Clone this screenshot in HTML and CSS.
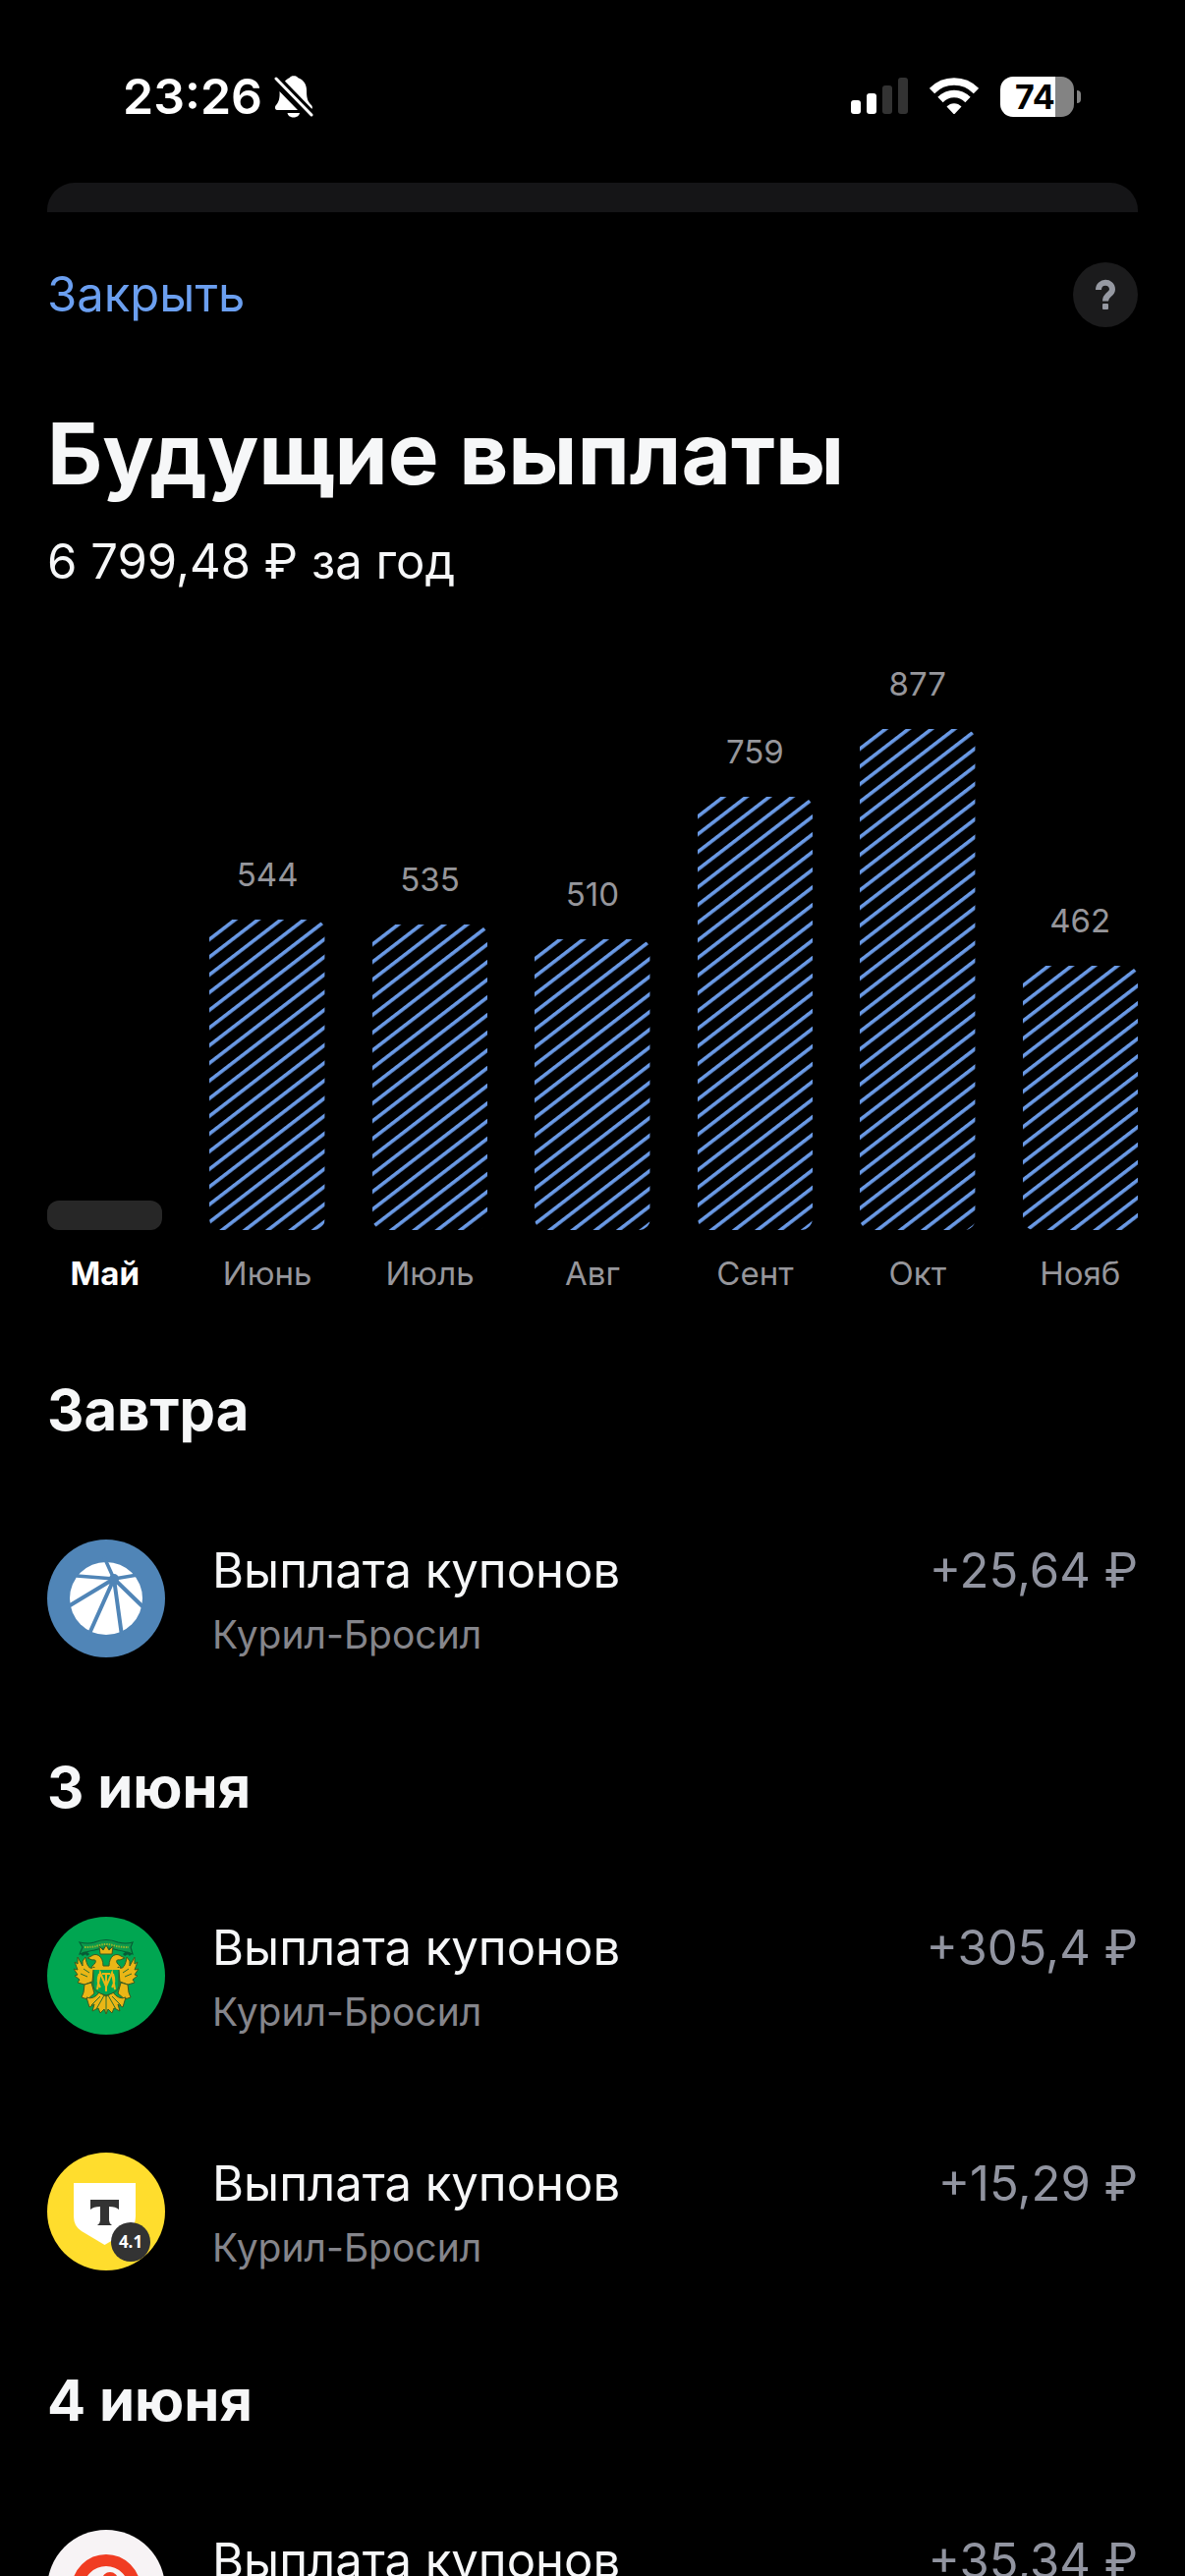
FILE: index.html
```html
<!DOCTYPE html>
<html lang="ru">
<head>
<meta charset="utf-8">
<meta name="viewport" content="width=device-width, initial-scale=1">
<title>Будущие выплаты</title>
<link rel="stylesheet" href="styles.css">
</head>
<body>
<div class="screen">
  <header class="status">
    <div class="status-group">
      <time class="clock">23:26</time>
      <svg class="bell" viewBox="0 0 40 44" width="40" height="44" aria-hidden="true">
        <path fill="#fff" d="M10 8 C12 5 14 4 16 3 C16.500 .5 23.500 .5 24 3 C30 5 33 10 33 16 C33 26 35 28 38 31 C39.500 33 39 35 37 36 Z M5.500 17 L24 36 H3 C.5 36 .5 32 2 31 C4.500 28 6 25 5.500 17 Z M13.500 39 H26 C25 45 14.500 45 13.500 39 Z"/>
        <path stroke="#000" stroke-width="9" d="M2 4 L38 41"/>
        <path stroke="#fff" stroke-width="3" stroke-linecap="round" d="M2 4 L38 41"/>
      </svg>
    </div>
    <div class="status-group status-right">
      <svg viewBox="0 0 58 38" width="58" height="38" aria-hidden="true">
        <rect x="0" y="23" width="10" height="14" rx="3" fill="#fff"/>
        <rect x="16" y="16" width="10" height="21" rx="3" fill="#fff"/>
        <rect x="32" y="8" width="10" height="29" rx="3" fill="#333"/>
        <rect x="48" y="0" width="10" height="37" rx="3" fill="#333"/>
      </svg>
      <svg viewBox="0 0 50 38" width="50" height="38" aria-hidden="true">
        <g fill="none" stroke="#fff" stroke-width="7.500">
          <path d="M2.500 13.500 C15 .8 35 .8 47.500 13.500"/>
          <path d="M11 22.500 C19 14.500 31 14.500 39 22.500"/>
        </g>
        <path fill="#fff" d="M17.500 29.500 C21.500 25 28.500 25 32.500 29.500 L26 36.500 Q25 37.500 24 36.500 Z"/>
      </svg>
      <div class="battery"><span class="battery-body">74</span><span class="battery-tip"></span></div>
    </div>
  </header>
  <div class="sheet-behind"></div>

  <main class="sheet">
    <nav class="toolbar">
      <button class="close" type="button">Закрыть</button>
      <button class="help" type="button" aria-label="Справка">
        <svg viewBox="0 0 24 32" width="24" height="32" aria-hidden="true">
          <path fill="none" stroke="#9699a2" stroke-width="6" d="M5 11 C5 1.500 19 1.500 19 10.500 C19 16 12 15.500 12 22.500"/>
          <rect x="9" y="25" width="6" height="6" rx="1" fill="#9699a2"/>
        </svg>
      </button>
    </nav>
    <h1 class="title">Будущие выплаты</h1>
    <p class="total">6 799,48 ₽ за год</p>

    <svg class="defs" width="0" height="0" aria-hidden="true">
      <defs>
        <pattern id="hatch" width="20" height="14.250" patternUnits="userSpaceOnUse" patternTransform="rotate(-37.600)">
          <rect width="20" height="3.600" fill="#6a9ae6"/>
        </pattern>
      </defs>
    </svg>
    <section class="chart" aria-label="Выплаты по месяцам">
      <div class="month current"><div class="bar empty"></div><span class="name">Май</span></div>
      <div class="month"><span class="value">544</span><svg class="bar" style="height:316px"><rect width="100%" height="100%" fill="url(#hatch)"/></svg><span class="name">Июнь</span></div>
      <div class="month"><span class="value">535</span><svg class="bar" style="height:311px"><rect width="100%" height="100%" fill="url(#hatch)"/></svg><span class="name">Июль</span></div>
      <div class="month"><span class="value">510</span><svg class="bar" style="height:296px"><rect width="100%" height="100%" fill="url(#hatch)"/></svg><span class="name">Авг</span></div>
      <div class="month"><span class="value">759</span><svg class="bar" style="height:441px"><rect width="100%" height="100%" fill="url(#hatch)"/></svg><span class="name">Сент</span></div>
      <div class="month"><span class="value">877</span><svg class="bar" style="height:510px"><rect width="100%" height="100%" fill="url(#hatch)"/></svg><span class="name">Окт</span></div>
      <div class="month"><span class="value">462</span><svg class="bar" style="height:269px"><rect width="100%" height="100%" fill="url(#hatch)"/></svg><span class="name">Нояб</span></div>
    </section>

    <div class="days">
    <section class="day">
      <h2 class="date">Завтра</h2>
      <div class="payments">
        <article class="payment">
          <svg class="logo" viewBox="0 0 120 120" aria-hidden="true">
            <circle cx="60" cy="60" r="60" fill="#5085b7"/>
            <circle cx="60" cy="60" r="37" fill="#fff"/>
            <g stroke="#5085b7" fill="none">
              <path stroke-width="3.500" d="M68 40 L58 18 M68 40 L30 37 M68 40 L92 36"/>
              <path stroke-width="4" d="M68 40 L20 69 M68 40 L42 98 M68 40 L76 98 M68 40 L99 70"/>
            </g>
            <circle cx="68" cy="40" r="5" fill="#5085b7"/>
          </svg>
          <div class="info"><h3 class="kind">Выплата купонов</h3><p class="account">Курил-Бросил</p></div>
          <span class="amount">+25,64 ₽</span>
        </article>
      </div>
    </section>

    <section class="day">
      <h2 class="date">3 июня</h2>
      <div class="payments">
        <article class="payment">
          <svg class="logo" viewBox="0 0 120 120" aria-hidden="true">
            <circle cx="60" cy="60" r="60" fill="#00a651"/>
            <path d="M33 26 Q42 28 48 26 Q60 21 72 26 Q80 28 87 26 L85 31 L87 38 Q78 35 72 34 Q60 30 48 34 Q42 35 33 38 L36 31 Z" fill="#0c9a4b" stroke="#075c35" stroke-width="1.200"/>
            <path d="M38 31 Q46 31 50 30 Q60 26 70 30 Q76 31 83 31" fill="none" stroke="#9bb52c" stroke-width="2" stroke-dasharray="1.500 1"/>
            <path d="M35 39 q4 -4 7 0 M78 39 q4 -4 7 0" fill="none" stroke="#075c35" stroke-width="3"/>
            <g fill="#eab616" stroke="#3b5a20" stroke-width="1">
              <path d="M54 38 L53 30 L57 34 L60 29 L63 34 L67 30 L66 38 Z"/>
              <path d="M57 50 C57 40 50 36 45 40 L41 42 L46 44 C51 43 50 47 46 50 L44 54 H76 L74 50 C70 47 69 43 74 44 L79 42 L75 40 C70 36 63 40 63 50 Z"/>
              <path d="M48 51 C43 55 40 49 39 41 L36 45 L36 50 L31 41 L31 48 L28 46 L31 54 L27 53 L31 59 L28 60 L33 64 L31 67 L38 69 L46 66 L47 56 Z"/>
              <path d="M72 51 C77 55 80 49 81 41 L84 45 L84 50 L89 41 L89 48 L92 46 L89 54 L93 53 L89 59 L92 60 L87 64 L89 67 L82 69 L74 66 L73 56 Z"/>
              <path d="M38 69 L45 67 L48 78 L41 84 L35 82 L37 77 Z M82 69 L75 67 L72 78 L79 84 L85 82 L83 77 Z"/>
              <path d="M40 82 Q47 85 53 77 L60 81 L67 77 Q73 85 80 82 L77 92 L72 89 L74 96 L68 93 L66 98 L62 94 L60 99 L58 94 L54 98 L52 93 L46 96 L48 89 L43 92 Z"/>
            </g>
            <path d="M60 80 V97 M58 80 L50 94 M62 80 L70 94 M54 81 L45 90 M66 81 L75 90 M37 53 l6 4 M34 58 l7 3 M83 53 l-6 4 M86 58 l-7 3" stroke="#2c6e2c" stroke-width="1"/>
            <path d="M47 53 H73 V71 Q72 77 60 80 Q48 77 47 71 Z" fill="#00a651" stroke="#3b5a20"/>
            <path d="M46 53 H74 M51 74 L54 57 L60 71 L66 57 L69 74 M60 58 V76 M53 58 Q50 66 54 72 M67 58 Q70 66 66 72 M56 58 H64" fill="none" stroke="#eab616" stroke-width="2"/>
            <path d="M57 40 h6 v4 l-3 3 l-3 -3 Z" fill="#00a651"/>
          </svg>
          <div class="info"><h3 class="kind">Выплата купонов</h3><p class="account">Курил-Бросил</p></div>
          <span class="amount">+305,4 ₽</span>
        </article>
        <article class="payment">
          <div class="logo logo-badged">
            <svg class="logo" viewBox="0 0 120 120" aria-hidden="true">
              <circle cx="60" cy="60" r="60" fill="#ffdd2d"/>
              <path d="M27 31 H90 V65 Q90 75 82 80 L58.500 94 L35 80 Q27 75 27 65 Z" fill="#fff"/>
              <path d="M44 48 H73 V58 Q70 55 63 55 V69 Q63 72 66 74 H51 Q54 72 54 69 V55 Q47 55 44 58 Z" fill="#333"/>
            </svg>
            <span class="rating">4.1</span>
          </div>
          <div class="info"><h3 class="kind">Выплата купонов</h3><p class="account">Курил-Бросил</p></div>
          <span class="amount">+15,29 ₽</span>
        </article>
      </div>
    </section>

    <section class="day">
      <h2 class="date">4 июня</h2>
      <div class="payments">
        <article class="payment">
          <svg class="logo" viewBox="0 0 120 120" aria-hidden="true">
            <circle cx="60" cy="60" r="60" fill="#f7f3f5"/>
            <circle cx="60" cy="60" r="29" fill="none" stroke="#f03c22" stroke-width="12"/>
            <circle cx="64" cy="51" r="8" fill="#f03c22"/>
          </svg>
          <div class="info"><h3 class="kind">Выплата купонов</h3><p class="account">Курил-Бросил</p></div>
          <span class="amount">+35,34 ₽</span>
        </article>
      </div>
    </section>
    </div>
  </main>
</div>
</body>
</html>
```
FILE: styles.css
```css
* { box-sizing: border-box; margin: 0; }

body {
  background: #000;
  color: #f6f7f8;
  font-family: Inter, "Liberation Sans", sans-serif;
}

button {
  border: 0;
  padding: 0;
  background: none;
  font: inherit;
}

.screen {
  height: 100vh;
  overflow: hidden;
}

.status {
  display: flex;
  align-items: center;
  justify-content: space-between;
  height: 186px;
  padding: 10px 106px 0 125px;
  color: #fff;
}

.status-group {
  display: flex;
  align-items: center;
  gap: 12px;
}

.status-right { gap: 22px; }

.clock {
  font-size: 50px;
  font-weight: 600;
  line-height: 60px;
}

.battery {
  display: flex;
  align-items: center;
  gap: 3px;
}

.battery-body {
  width: 75px;
  height: 41px;
  padding-left: 15px;
  border-radius: 13px;
  background: linear-gradient(90deg, #fff 56px, #838383 56px);
  color: #000;
  font-size: 34px;
  font-weight: 700;
  line-height: 41px;
}

.battery-tip {
  width: 4px;
  height: 13px;
  border-radius: 0 6px 6px 0;
  background: #838383;
}

.sheet-behind {
  height: 30px;
  margin: 0 48px;
  border-radius: 28px 28px 0 0;
  background: #151517;
}

.sheet { padding: 51px 48px 0; }

.toolbar {
  display: flex;
  align-items: center;
  justify-content: space-between;
}

.close {
  color: #6b9ff0;
  font-size: 49px;
  line-height: 66px;
}

.help {
  display: grid;
  place-items: center;
  width: 66px;
  height: 66px;
  border-radius: 50%;
  background: #1b1b1c;
}

.title {
  margin-top: 76px;
  font-size: 87px;
  font-weight: 700;
  line-height: 106px;
}

.total {
  margin-top: 26px;
  font-size: 49px;
  line-height: 62px;
}

.defs { display: block; }

.chart {
  display: flex;
  align-items: flex-end;
  gap: 48px;
  margin-top: 73px;
}

.month {
  display: flex;
  flex: 1;
  flex-direction: column;
  align-items: center;
  color: #96969b;
  font-size: 33px;
  line-height: 40px;
}

.current {
  color: #fff;
  font-weight: 700;
}

.value { margin-bottom: 26px; }

.name { margin-top: 24px; }

.bar {
  display: block;
  width: 100%;
  border-radius: 12px;
}

.empty {
  height: 30px;
  background: #272727;
}

.days {
  display: flex;
  flex-direction: column;
  gap: 91px;
  margin-top: 83px;
}

.day {
  display: flex;
  flex-direction: column;
  gap: 96px;
}

.date {
  font-size: 58px;
  font-weight: 700;
  line-height: 72px;
}

.payments {
  display: flex;
  flex-direction: column;
  gap: 115px;
}

.payment {
  display: flex;
  align-items: flex-start;
}

.logo {
  flex: none;
  display: block;
  width: 120px;
  height: 120px;
}

.logo-badged { position: relative; }

.rating {
  position: absolute;
  right: 15px;
  bottom: 9px;
  width: 40px;
  height: 40px;
  border-radius: 50%;
  background: #333;
  color: #fff;
  font-family: "Noto Sans", sans-serif;
  font-size: 17px;
  font-weight: 700;
  line-height: 40px;
  text-align: center;
}

.info {
  flex: 1;
  padding-left: 48px;
}

.kind,
.amount {
  font-size: 49px;
  font-weight: 400;
  line-height: 64px;
}

.account {
  margin-top: 5px;
  color: #85858b;
  font-size: 39px;
  line-height: 56px;
}

.amount { color: #9194a0; }
```
